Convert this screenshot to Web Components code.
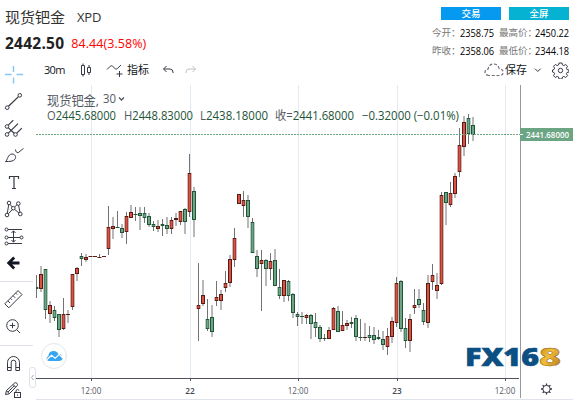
<!DOCTYPE html>
<html lang="zh-CN">
<head>
<meta charset="UTF-8">
<title>现货钯金 XPD</title>
<style>
  body {
    margin: 0;
    width: 573px;
    height: 400px;
    overflow: hidden;
    background: #fff;
    font-family: "Open Sans", "Noto Sans CJK SC", sans-serif;
  }
</style>
</head>
<body>
<quote-app></quote-app>

<script>
class QuoteHeader extends HTMLElement {
  connectedCallback() {
    this.attachShadow({ mode: 'open' });
    this.shadowRoot.innerHTML = `
      <style>
        :host {
          display: flex;
          justify-content: space-between;
          height: 58px;
          flex: none;
          box-sizing: border-box;
          padding: 7px 4px 0 5px;
        }
        .name {
          display: flex;
          align-items: center;
          height: 18px;
          gap: 12px;
          font-size: 15px;
          color: #333;
        }
        .code { font-size: 13px; letter-spacing: -0.2px; padding-top: 1px; }
        .price {
          display: flex;
          align-items: center;
          height: 20px;
          margin-top: 8px;
          gap: 7px;
        }
        .last { font-size: 15.5px; font-weight: 700; color: #222; letter-spacing: 0.25px; }
        .change { font-size: 12.5px; color: #f00; letter-spacing: 0.05px; }
        .actions { display: flex; gap: 8px; justify-content: flex-end; }
        .btn {
          width: 60px;
          height: 13px;
          line-height: 13px;
          text-align: center;
          font-size: 9.5px;
          font-weight: 500;
          color: #fff;
          background: #0699f0;
        }
        .btn.full { background: #06b2d2; }
        .stats {
          display: grid;
          grid-template-columns: 28px 39px 36px 34px;
          grid-auto-rows: 18px;
          align-items: center;
          margin-top: 4px;
          line-height: 18px;
          white-space: nowrap;
        }
        .stats i { font-style: normal; font-size: 9.5px; color: #777; }
        .stats b {
          width: 34px;
          font-size: 10.5px;
          font-weight: 400;
          color: #000;
          transform: scaleX(0.88);
          transform-origin: left;
        }
      </style>
      <div>
        <div class="name"><span>现货钯金</span><span class="code">XPD</span></div>
        <div class="price"><span class="last">2442.50</span><span class="change">84.44(3.58%)</span></div>
      </div>
      <div>
        <div class="actions"><span class="btn">交易</span><span class="btn full">全屏</span></div>
        <div class="stats">
          <i>今开：</i><b>2358.75</b><i>最高价：</i><b>2450.22</b>
          <i>昨收：</i><b>2358.06</b><i>最低价：</i><b>2344.18</b>
        </div>
      </div>
    `;
  }
}

class DrawingTools extends HTMLElement {
  connectedCallback() {
    this.attachShadow({ mode: 'open' });
    this.shadowRoot.innerHTML = `
      <style>
        :host {
          display: block;
          position: relative;
          width: 36px;
          flex: none;
          box-sizing: border-box;
          padding-top: 3px;
          overflow: hidden;
        }
        svg {
          display: block;
          width: 28px;
          height: 27px;
          fill: none;
          stroke: #363a45;
          stroke-width: 1;
        }
        hr { border: 0; height: 1px; width: 33px; margin: 4px 0; background: #dfe1ea; }
        .handle {
          position: absolute;
          left: 29px;
          top: 309px;
          width: 5px;
          height: 19px;
          border: 1px solid #dde1ea;
          border-radius: 3px;
          background: #fff;
        }
        .handle svg { width: 5px; height: 19px; stroke: #9aa9b8; }
      </style>
      <svg viewBox="0 0 28 27"><path stroke="#84c5f4" stroke-width="1.4" d="M5 13.5h6.5M16.5 13.5H23M13.500 5v6M13.500 16.5v6"/></svg>
      <svg viewBox="0 0 28 27"><circle cx="7.2" cy="19.7" r="1.8"/><circle cx="19.8" cy="7.3" r="1.8"/><path stroke-width="1.3" d="M8.5 18.3L18.5 8.6"/></svg>
      <svg viewBox="0 0 28 27"><circle cx="7" cy="11.5" r="1.8"/><circle cx="7" cy="19.5" r="1.8"/><circle cx="15.5" cy="19.5" r="1.8"/><path stroke-width="1.2" d="M8.3 10.2l5-5M8.4 18.1L18 8.6M8.4 12.9l5.8 5.3M16.8 18.1l5-5"/></svg>
      <svg viewBox="0 0 28 27"><path d="M5.5 19.5c2-1 2.2-7.5 6.6-7.5 3.2 0 4.4 3.2 2.8 5.3-1.8 2.3-5.5 2.2-9.4 2.2zM15.5 7.5c0 2 1 3.2 2.7 3.2l5.3-4.3"/></svg>
      <svg viewBox="0 0 28 27"><path stroke-width="1.2" d="M9.5 10V7.5h9V10M14 7.5v12M12 19.5h4"/></svg>
      <svg viewBox="0 0 28 27"><circle cx="7" cy="19" r="1.8"/><circle cx="9" cy="7" r="1.8"/><circle cx="13.3" cy="12.2" r="1.8"/><circle cx="18.3" cy="7.6" r="1.8"/><circle cx="20.3" cy="18" r="1.8"/><path d="M7.3 17.2L8.7 8.8M8.4 17.8l3.8-4.2M10.1 8.5l2 2.3M14.6 11l2.3-2.1M14.6 13.4l4.3 3.5M18.6 9.4l1.4 6.8"/></svg>
      <svg viewBox="0 0 28 27"><circle cx="6.5" cy="6.5" r="1.5"/><circle cx="6.5" cy="14.5" r="1.5"/><circle cx="21.5" cy="14.5" r="1.5"/><circle cx="6.5" cy="20.5" r="1.5"/><path d="M8 6.5h14M8 14.5h12M8 20.5h14M13.5 8v11M11.5 10l2-2.2 2 2.2M11.5 17l2 2.2 2-2.2"/></svg>
      <svg viewBox="0 0 28 27"><path stroke="#131722" stroke-width="2.8" d="M19.500 13H9.500M14.2 7.500L8.700 13l5.500 5.500"/></svg>
      <hr>
      <svg viewBox="0 0 28 27"><path d="M4.8 17.8L18 4.6l4 4L8.8 21.8zM8 15l2 2M10.6 12.4l1.4 1.4M13.2 9.8l2 2M15.8 7.2l1.4 1.4"/></svg>
      <svg viewBox="0 0 28 27"><circle cx="12.5" cy="12.5" r="5.8"/><path d="M16.8 16.8l3.2 3.2M9.8 12.5h5.4M12.5 9.8v5.4"/></svg>
      <hr style="margin-top:5px">
      <svg viewBox="0 0 28 27"><path d="M7.5 20.5v-8a6 6 0 0 1 12 0v8h-3.7v-8a2.3 2.3 0 0 0-4.6 0v8zM7.5 17.5h3.7M15.8 17.5h3.7"/></svg>
      <svg viewBox="0 0 28 27"><path d="M5.5 17.5l1-4L14.6 6q1.2-.8 2.3.3t.3 2.3L9.3 16.8zM6.5 13.5l2.8 3.3M13 7.5l2.7 2.7M8 15l6.5-6.3"/><rect x="14.5" y="15.5" width="6" height="5"/><path d="M16 15v-1.5q1.5-2.2 3.2 0M17.5 17.5v1.2"/></svg>
      <div class="handle"><svg viewBox="0 0 5 19"><path d="M3.5 7L1.5 9.5l2 2.5"/></svg></div>
    `;
  }
}

class ChartToolbar extends HTMLElement {
  connectedCallback() {
    this.attachShadow({ mode: 'open' });
    this.shadowRoot.innerHTML = `
      <style>
        :host {
          display: flex;
          align-items: center;
          height: 24px;
          margin-bottom: 1px;
          flex: none;
          box-sizing: border-box;
          padding: 0 4px 0 8px;
          font-size: 11px;
          color: #131722;
        }
        span { line-height: 16px; white-space: nowrap; }
        svg { flex: none; height: 18px; fill: none; stroke: #363a45; }
        .interval { width: 34px; font-size: 11px; letter-spacing: -0.7px; }
        .save { margin-left: 1px; width: 29px; }
        .cloud { margin-left: auto; }
      </style>
      <span class="interval">30m</span>
      <svg width="28" viewBox="0 0 28 18"><path d="M3.5 4.5h3v9h-3zM5 2.5v2M5 13.5v2M9.5 6.5h3v5h-3zM11 4v2.5M11 11.5V14"/></svg>
      <svg width="21" viewBox="0 0 21 18"><path d="M1 8.5l3.3-3.3q1.1-1 2.2 0l2.7 2.5q1 .9 2 0L15 4M13.500 10v6M10.500 13h6"/></svg>
      <span style="width:35px">指标</span>
      <svg width="22" viewBox="0 0 22 18"><path d="M4.5 5L1.5 8l3 3M1.7 8H8q3.2 0 3.2 4"/></svg>
      <svg width="14" viewBox="0 0 14 18" style="stroke:#bfc1c6"><path d="M8.5 5l3 3-3 3M11.3 8H5q-3.2 0-3.2 4"/></svg>
      <svg class="cloud" width="20" viewBox="0 0 20 18"><path stroke="#6a6d78" stroke-width="1.2" stroke-dasharray="3 1.700" d="M5 14.5Q1 14 1 11.2 1.2 8.5 4 8.2 5 3 9.7 3q4.3 0 5.5 4.7 4 .5 4 3.6 0 2.9-3.7 3.2z"/></svg>
      <span class="save">保存</span>
      <svg width="8" viewBox="0 0 8 18"><path d="M1 7.7l2.8 2.8 2.8-2.8"/></svg>
      <svg width="17" viewBox="0 0 17 18" style="margin-left:10px"><path d="M7 2h3l.5 2 1.3.6 1.900-1.100 1.800 1.800-1.100 1.900.6 1.300 2 .5v2l-2 .5-.6 1.300 1.100 1.900-1.800 1.800-1.900-1.100-1.300.6-.5 2H7l-.5-2-1.300-.6-1.900 1.100-1.800-1.800 1.100-1.900L2 11.500l-1.500-.5V9L2 8.500l.6-1.300-1.100-1.900 1.800-1.800 1.900 1.100L6.500 4z"/><circle cx="8.500" cy="9.500" r="2.200"/></svg>
    `;
  }
}

// [high, body top, body bottom, low, direction], all in page y
const CANDLES = [
  [275,287.3,289.3,298,'g'],[266,274.3,288.7,292.3,'r'],[269,269.3,309.7,319,'g'],[301,305.3,314,323,'r'],
  [305.7,310,317.7,320.7,'g'],[314,314.3,329.7,337.3,'g'],[298,314,329,329.7,'r'],[310.3,313.5,314.3,322.7,'r'],
  [274.3,274.3,306.7,310,'r'],[267.3,268,274.3,280.7,'r'],[253,256,259.3,265.7,'g'],[254,257,259.7,262,'r'],
  [256,256,256.7,256.7,'r'],[256,256,256.7,256.7,'r'],[254,257,257.5,258,'r'],[256,256,256.7,256.7,'r'],
  [206,227,248.7,255.3,'r'],[216.7,226,229,239.3,'r'],[211,226.7,227.5,228,'g'],[224,228,232.7,238,'g'],
  [212,216,232.3,244.3,'r'],[205,212,218,218,'r'],[207,214,214.7,220.7,'g'],[207,213,215.7,230,'g'],
  [207,213,218,223.3,'g'],[213,216.3,225,227.3,'g'],[221.3,224,227.3,231.3,'g'],[220,225.7,228.7,232.3,'r'],
  [219,224,225.7,236,'g'],[217.3,225.3,229,234,'g'],[217.3,220,229.3,233.7,'r'],[213.3,218,220,226,'r'],
  [211,211,221.7,225,'r'],[208.3,209,221.7,233.7,'g'],[154,173,211.7,217,'r'],[187,191,219.7,237,'g'],
  [263,304.7,308.7,341.3,'r'],[279.7,295,303.7,305.7,'r'],[298.7,319.3,328.7,331.3,'g'],[305,317.3,331.7,336.7,'g'],
  [280.7,297.3,300.7,306,'r'],[289.7,294,300.7,310.3,'r'],[271.3,283.3,287.7,291.7,'r'],[255,259.3,282.7,286.7,'r'],
  [228,237.7,260,266.7,'r'],[194,194,203.7,203.7,'r'],[191,200,205.7,217,'r'],[195,200.3,216.7,228,'g'],
  [218,222.3,252.7,252.7,'g'],[249.7,256,269,276.7,'g'],[250.3,260.3,263.7,310.7,'r'],[259,260,269,286.3,'g'],
  [253.3,261,269,280.3,'r'],[249,260,286.3,286.3,'g'],[269.3,287.3,295.7,299,'g'],[280,280.3,296,301.7,'r'],
  [279.7,280.7,295.7,301,'g'],[293,294.3,312.7,318,'g'],[312.3,314,317,326,'g'],[312.3,316,316.7,323.7,'g'],
  [314,315.3,318,323.7,'r'],[314.3,315.3,323.7,338.7,'g'],[313,322.3,327.7,336.7,'g'],[324.7,327.3,338.7,341.7,'g'],
  [334,338,338.7,340.7,'g'],[327.3,330,338.7,339,'r'],[307,307.7,329.7,330,'r'],[306,310.7,331.7,332.3,'g'],
  [310.7,325,330.7,331,'r'],[320,323.3,326,330,'r'],[317.3,322.3,323.7,328,'g'],[315,318.3,337,341.3,'g'],
  [319,337.3,337.9,341.3,'g'],[322.7,337.3,337.9,341.3,'r'],[326,334.7,338,342.3,'g'],[327,334.7,340,344.3,'g'],
  [329.7,337,339.3,340,'g'],[331,338.7,345,350.3,'g'],[328,336,347.3,355,'r'],[316.7,321,337,342.7,'r'],
  [277.3,283,323,327,'r'],[280,280.7,328.7,332.3,'g'],[318,328,341,348,'g'],[314.3,319.3,341,352,'r'],
  [289,305.3,307.7,313.7,'r'],[289.3,299,304.7,308,'g'],[303,310,322,324.7,'g'],[275,283,323,327.7,'r'],
  [264,275,282,290,'r'],[272.7,285.3,291,299,'r'],[192,195.3,284,285,'r'],[192.3,192.3,202.7,224.7,'g'],
  [182,193,204.7,206.7,'r'],[173.3,176.3,193.7,198.3,'r'],[128,145.3,171.7,177,'r'],[116,122.3,147.3,155.7,'r'],
  [114.3,118.3,133.7,143.7,'g'],[117,125.3,135,141,'g']
];

const COLORS = {
  r: { fill: '#d75442', border: '#5b1a13' },
  g: { fill: '#6ba583', border: '#225437' }
};

class CandleChart extends HTMLElement {
  connectedCallback() {
    this.attachShadow({ mode: 'open' });
    this.shadowRoot.innerHTML = `
      <style>
        :host { display: block; position: relative; flex: 1; min-height: 0; overflow: hidden; }
        svg { display: block; }
        text { font-family: "Open Sans", "Noto Sans CJK SC", sans-serif; }
        .grid { stroke: #e1ecf2; }
        .tick { stroke: #50535e; }
        .time { font-size: 9.5px; fill: #555963; text-anchor: middle; }
        .day { font-weight: 600; fill: #444853; }
        .name { font-size: 13px; fill: #555963; }
        .key { font-size: 12px; fill: #555963; }
        .val { font-size: 12px; fill: #225437; }
        .logo { font-family: Inter, sans-serif; font-weight: 900; font-size: 25px; }
      </style>
      <svg width="537" height="317" viewBox="36 83 537 317">
        <defs>
          <linearGradient id="gold" x1="0" y1="0" x2="1" y2="1">
            <stop offset="0" stop-color="#b77a12"/>
            <stop offset=".45" stop-color="#f1bd3c"/>
            <stop offset="1" stop-color="#a96f10"/>
          </linearGradient>
        </defs>
        ${this.axis()}
        ${CANDLES.map((c, i) => this.candle(c, i)).join('')}
        <path d="M36 134.5H520" stroke="#6ba583" stroke-dasharray="2 1"/>
        ${this.legend()}
        <path d="M520.5 85V398" stroke="#9598a1"/>
        ${this.logo()}
        <rect x="520" y="128" width="53" height="13" fill="#6ba583"/>
        <path d="M520 134.5h3" stroke="#fff"/>
        <text x="526" y="137.5" font-size="9" font-weight="600" fill="#fff" textLength="43" lengthAdjust="spacingAndGlyphs">2441.68000</text>
        <circle cx="54" cy="356" r="12.5" fill="#fff" stroke="#e4e6ea"/>
        <path fill="#37a6ef" d="M49 361q-2.500-.5-2.500-2.500 0-1.500 2-2.500 0-4.500 4.500-5 4-.3 5 2.800 3.800 0 4 3.200 1 1.500.2 2.600-.8 1.400-3 1.400z"/>
        <path d="M47 359.5l4.500-4.200 3.700 3 4-4 3.500 3.700" fill="none" stroke="#fff" stroke-width="1.2"/>
        <g fill="none" stroke="#363a45">
          <circle cx="546.5" cy="389" r="3.7"/>
          <path stroke-width="1.3" d="M546.5 383.500v2M546.500 392.500v2M541 389h2M550 389h2M542.600 385.100l1.400 1.400M549 391.500l1.400 1.400M550.400 385.100l-1.400 1.400M544 391.500l-1.400 1.400"/>
        </g>
      </svg>
    `;
  }

  axis() {
    const marks = [[91.5, '12:00'], [190.5, '22'], [298.5, '12:00'], [397.5, '23'], [505.5, '12:00']];
    const lines = marks.map(([x, label]) => `
      <path class="grid" d="M${x} 85V378"/>
      <path class="tick" d="M${x} 378v3"/>
      <text class="time ${label.length === 2 ? 'day' : ''}" x="${x - 0.5}" y="394" textLength="${label.length === 2 ? 9.5 : 20.5}" lengthAdjust="spacingAndGlyphs">${label}</text>
    `).join('');
    return `${lines}
      <path class="tick" d="M36 378.5H519"/>
      <path stroke="#e0e3eb" d="M36 399.5H573"/>`;
  }

  candle([high, top, bottom, low, dir], i) {
    const x = 36.5 + i * 4.5;
    const { fill, border } = COLORS[dir];
    const t = Math.round(top);
    const b = Math.max(Math.round(bottom), t + 1);
    const wick = `<path d="M${x} ${Math.round(high)}V${Math.round(low)}" stroke="#737375"/>`;
    if (b - t < 2) {
      return `${wick}<rect x="${x - 2}" y="${t}" width="4" height="1" fill="${border}"/>`;
    }
    // odd candles sit on whole pixels, even ones get soft sides
    if (i % 2) {
      return `${wick}<rect x="${x - 1.5}" y="${t + 0.5}" width="3" height="${b - t - 1}" fill="${fill}" stroke="${border}"/>`;
    }
    return `${wick}
      <rect x="${x - 2.5}" y="${t}" width="5" height="${b - t}" fill="${border}" opacity=".3"/>
      <rect x="${x - 1.5}" y="${t}" width="3" height="${b - t}" fill="${border}"/>
      <rect x="${x - 1.5}" y="${t + 1}" width="3" height="${b - t - 2}" fill="${fill}" opacity=".6"/>
      <rect x="${x - 0.5}" y="${t + 1}" width="1" height="${b - t - 2}" fill="${fill}"/>`;
  }

  legend() {
    const fit = 'lengthAdjust="spacingAndGlyphs"';
    return `
      <text class="name" x="47" y="104.5" textLength="52" ${fit}>现货钯金,</text>
      <text class="name" x="103" y="103" textLength="13" ${fit}>30</text>
      <path d="M119 97.5l2.5 2.5 2.5-2.5" fill="none" stroke="#50535e" stroke-width="1.3"/>
      <text class="key" x="47" y="120" textLength="69" ${fit}>O<tspan class="val">2445.68000</tspan></text>
      <text class="key" x="124" y="120" textLength="69" ${fit}>H<tspan class="val">2448.83000</tspan></text>
      <text class="key" x="200" y="120" textLength="68" ${fit}>L<tspan class="val">2438.18000</tspan></text>
      <text class="key" x="275" y="120" textLength="79" ${fit}>收=<tspan class="val">2441.68000</tspan></text>
      <text class="val" x="362" y="120" textLength="97" ${fit}>−0.32000 (−0.01%)</text>`;
  }

  logo() {
    return `
      <g class="logo">
        <text x="465" y="366" fill="#0b4f83" stroke="#0b4f83" stroke-width=".6" textLength="74" lengthAdjust="spacingAndGlyphs">FX16</text>
        <text x="539" y="366" fill="url(#gold)" stroke="#8a5a10" stroke-width=".4" textLength="22" lengthAdjust="spacingAndGlyphs">8</text>
      </g>`;
  }
}

class QuoteApp extends HTMLElement {
  connectedCallback() {
    this.attachShadow({ mode: 'open' });
    this.shadowRoot.innerHTML = `
      <style>
        :host { display: flex; flex-direction: column; height: 400px; }
        .body { display: flex; flex: 1; min-height: 0; }
        .main { display: flex; flex-direction: column; flex: 1; min-width: 0; }
      </style>
      <quote-header></quote-header>
      <div class="body">
        <drawing-tools></drawing-tools>
        <div class="main">
          <chart-toolbar></chart-toolbar>
          <candle-chart></candle-chart>
        </div>
      </div>
    `;
  }
}

customElements.define('quote-header', QuoteHeader);
customElements.define('drawing-tools', DrawingTools);
customElements.define('chart-toolbar', ChartToolbar);
customElements.define('candle-chart', CandleChart);
customElements.define('quote-app', QuoteApp);
</script>
</body>
</html>
